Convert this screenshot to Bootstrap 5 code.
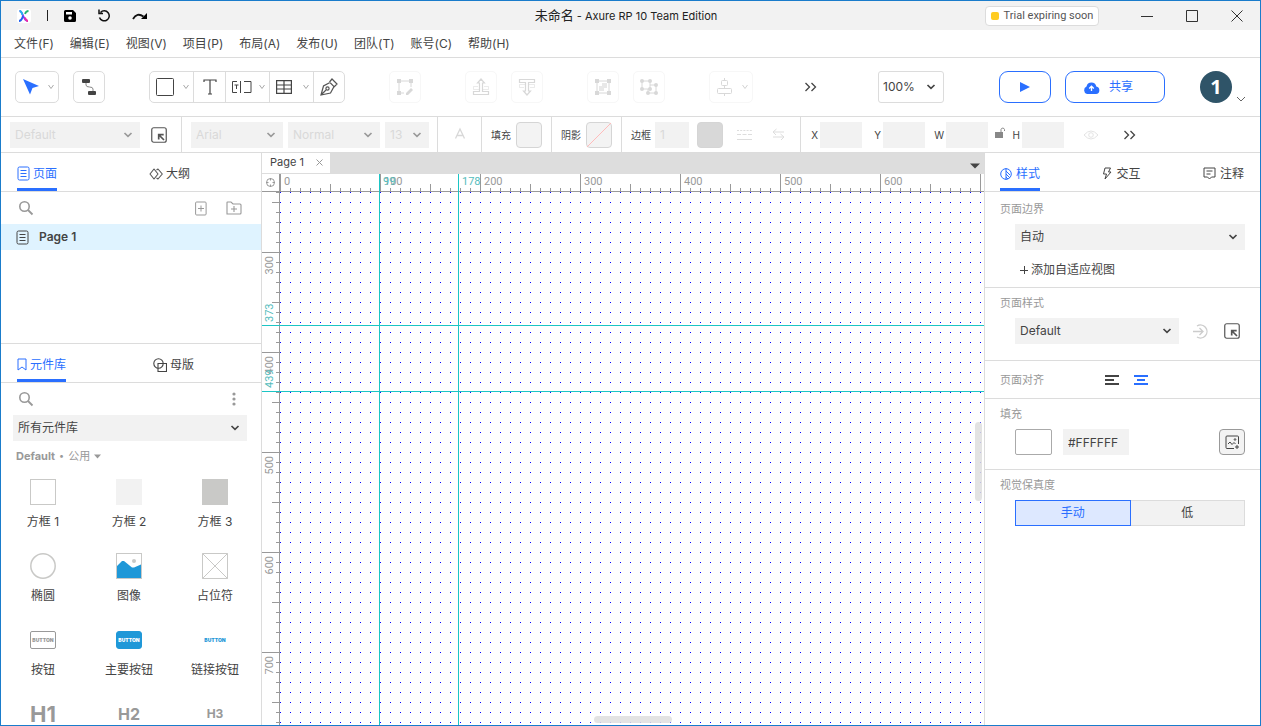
<!DOCTYPE html>
<html lang="zh-CN">
<head>
<meta charset="utf-8">
<meta name="viewport" content="width=device-width, initial-scale=1">
<title>未命名 - Axure RP 10 Team Edition</title>
<link rel="stylesheet" href="https://cdn.jsdelivr.net/npm/bootstrap@5.3.0/dist/css/bootstrap.min.css">
<style>
:root{--ln:#dcdcdc;--ink:#444;--mute:#999;--blue:#2a6fff;--field:#f2f2f2}
body{font:12px/16px Inter,"Noto Sans CJK SC",sans-serif;color:var(--ink);background:#fff}
.app{height:100vh;border:1px solid #1a7ccb;overflow:hidden}
.titlebar,.menus,.toolbar,.format{flex:none}
svg{display:block;flex:none}
button{padding:0;border:0;background:none;color:inherit;display:flex;align-items:center;justify-content:center;flex:none}
a{color:inherit;text-decoration:none}
.titlebar{display:grid;grid-template-columns:1fr auto 1fr;height:29px;background:#f2f2f2;padding:0 17px 0 8px;color:#111}
.titlebar .tools{padding-left:8px}
.titlebar .name{font-size:11px;color:#222}
.titlebar .name b{font-weight:400;font-size:13px}
.bartick{width:1px;height:11px;background:#222;margin:0 16px}
.trial{width:114px;height:20px;background:#fff;border:1px solid var(--ln);border-radius:4px;font:11px/16px Roboto,sans-serif;color:#555;margin-right:9px;gap:5px;white-space:nowrap}
.trial i{width:8px;height:8px;border-radius:2px;background:#fc2}
.win{gap:33px;color:#333}
.menus{height:28px;border-bottom:1px solid var(--ln);padding:0 13px;gap:16px}
.toolbar{height:59px;border-bottom:1px solid var(--ln);padding:0 14px}
.tool{width:32px;height:32px;border:1px solid var(--ln);border-radius:5px;background:#fff}
.tool.wide,.shapes .wide{width:44px;justify-content:space-between;padding:0 3px 0 6px}
.faint{border-color:#f7f7f7;color:#d8d8d8}
.shapes{border:1px solid var(--ln);border-radius:5px;height:32px;margin:0 44px}
.shapes button{height:30px;width:32px;border-right:1px solid var(--ln)}
.shapes button:last-child{border:0;width:30px}
.gap-a{margin-left:44px}.gap-b{margin-left:14px}
select{appearance:none;border:0;border-radius:0;height:26px;padding:0 20px 0 5px;color:inherit;flex:none;font-size:12px;opacity:1!important;
background:var(--field) url("data:image/svg+xml,%3Csvg xmlns='http://www.w3.org/2000/svg' width='10' height='6'%3E%3Cpath d='M1.5 1l3.5 3.3L8.5 1' fill='none' stroke='%23444' stroke-width='1.7'/%3E%3C/svg%3E") no-repeat right 7px center}
select:disabled{color:#d9d9d9;background-image:url("data:image/svg+xml,%3Csvg xmlns='http://www.w3.org/2000/svg' width='10' height='6'%3E%3Cpath d='M1.5 1l3.5 3.3L8.5 1' fill='none' stroke='%23999' stroke-width='1.7'/%3E%3C/svg%3E")}
select.zoomer{width:66px;height:32px;border:1px solid var(--ln);border-radius:3px;background-color:#fff;padding-left:4px}
.pill{height:32px;border:1px solid var(--blue);border-radius:9px;color:var(--blue)}
.play{width:52px}.share{width:100px;gap:9px;padding-right:14px}
.avatar{width:32px;height:32px;border-radius:50%;background:#2f5468;color:#fff;font:700 20px/32px "Open Sans",sans-serif}
.format{height:36px;border-bottom:1px solid var(--ln);font-size:10px}
.format>div{height:35px;flex:none;padding-left:9px;border-right:1px solid var(--ln)}
.format>div:last-child{border:0}
.format input{border:0;background:var(--field);height:26px;width:42px;padding:0 5px;color:#d9d9d9;font-size:12px;border-radius:0}
.dim{width:21px;padding-right:2px;text-align:right}
.dim.first{width:10px}.dim.last{width:17px}
.w-sel{width:130px}.w-font{width:92px}.w-size{width:44px}
.swl{gap:5px}
.sw{width:26px;height:26px;border:1px solid #d5d5d5;border-radius:4px;background:#f3f3f3}
.left{width:261px;border-right:1px solid var(--ln)}
.right{width:276px;border-left:1px solid var(--ln)}
.left,.right{flex:none}
.pages{height:190px}
.tabs{height:39px;border-bottom:1px solid var(--ln)}
.tabs button{height:38px;gap:4px;padding-top:6px;border-bottom:3px solid transparent}
.left .tabs button{gap:3px}
.tabs .on{color:var(--blue);border-color:var(--blue)}
.seek{height:32px;padding:0 19px 0 17px;color:var(--mute)}
.pagerow{height:26px;background:#dff3ff;padding-left:15px;gap:10px;font-weight:600}
.lib{border-top:1px solid var(--ln)}
.lib select{margin:0 14px 0 12px}
.group{height:30px;padding-left:15px;color:var(--mute);font-size:11px}
.group span:nth-child(2){font-size:9px}
.widgets{display:grid;grid-template-columns:repeat(3,86px);grid-auto-rows:74px;padding-top:8px;margin-left:-1px;text-align:center}
.widgets .pic{height:26px;display:flex;align-items:center;justify-content:center;color:#999;font-weight:700}
.widgets div>span{display:block;margin-top:9px;white-space:nowrap}
.box{width:26px;height:26px;border:1px solid #c9c9c7}
.wbtn{width:26px;height:18px;border:1px solid #999;border-radius:2px;font-size:5px;line-height:16px}
.wbtn.p{background:#1f98d8;border-color:#1f98d8;color:#fff;border-radius:3px}
.wbtn.l{border-color:transparent;color:#1f98d8}
.docbar{height:21px;background:#ddd}
.doc{height:20px;width:68px;background:#fff;font-size:11px;padding:0 7px 2px 8px}
.stage text{font:11px Roboto,sans-serif;fill:#999}
.stage .g{fill:#55bcbc}
.bar{position:absolute;background:rgba(222,222,222,.85);border-radius:4px}
.vbar{width:7px;height:79px;right:2px;top:45%}
.hbar{height:7px;width:78px;left:46%;bottom:2px}
.sec{padding:0 15px;border-bottom:1px solid var(--ln)}
.sec:last-child{border:0}
.cap{font-size:11px;color:var(--mute);line-height:18px}
.ctl{margin-left:15px}
.under{margin-top:6px}
.hex{border:0;background:var(--field);width:66px;height:26px;padding:0 5px;margin-left:11px;color:inherit}
.seg label{width:116px;height:26px;line-height:24px;text-align:center;border:1px solid var(--ln);background:var(--field)}
.seg label+input+label{margin-left:-1px}
.seg input:checked+label{background:#dde8ff;border-color:var(--blue);color:var(--blue);position:relative}
</style>
</head>
<body>
<svg width="0" height="0" class="position-absolute">
<defs>
<symbol id="chev" viewBox="0 0 8 6"><path d="M1.500 1l2.500 3.500L6.500 1" stroke="#aaa" fill="none"/></symbol>
<symbol id="more" viewBox="0 0 12 10"><path d="M1 1l4 4-4 4M7 1l4 4-4 4" stroke-width="1.3"/></symbol>
<symbol id="page" viewBox="0 0 13 15"><rect x="1" y="1" width="11" height="13" rx="1.5"/><path d="M3.5 4.500h6M3.500 7.500h6M3.500 10.500h6"/></symbol>
<symbol id="seek" viewBox="0 0 16 16"><circle cx="6.5" cy="6.5" r="4.7" stroke-width="1.6"/><path d="M10 10l4.5 4.5" stroke-width="1.8"/></symbol>
<symbol id="manage" viewBox="0 0 16 16"><rect x=".75" y=".75" width="14.5" height="14.5" rx="2" stroke-width="1.2"/><path d="M7.700 12.500V7.700h5M8 8l5 5" stroke-width="1.7"/></symbol>
</defs>
</svg>
<div class="app d-flex flex-column">
<header class="titlebar align-items-center">
<div class="tools d-flex align-items-center">
<svg width="14" height="14"><rect width="14" height="14" rx="3" fill="#fff"/><g fill="none" stroke-width="1.8"><path d="M2.500 2c4 0 3 10 8.500 10" stroke="#8a3cf0"/><path d="M2 12c3 0 3-3 4-5" stroke="#2461ef"/><path d="M8 5q1-3 3.500-3" stroke="#22b573"/><path d="M8 8.500q1 3.500 3 3.500" stroke="#ef2ca5"/><path d="M2.500 2q2 0 3 4" stroke="#20b9ee"/></g></svg>
<span class="bartick"></span>
<button aria-label="保存"><svg width="12" height="12"><path d="M1.500 0H9l3 3v7.500a1.500 1.500 0 0 1-1.500 1.500h-9A1.500 1.500 0 0 1 0 10.500v-9A1.500 1.500 0 0 1 1.500 0z"/><path d="M2 2h6v2.500H2z" fill="#fff"/><circle cx="6" cy="8" r="1.800" fill="#fff"/></svg></button>
<button aria-label="撤销" style="margin:0 22px"><svg width="12" height="13" fill="none" stroke="#111" stroke-width="1.500"><path d="M2.500 3.500A5 5 0 1 1 1.500 8.500M1 .5V4.500h4"/></svg></button>
<button aria-label="重做"><svg width="16" height="10"><path d="M1 8q4-7 10.500-2.500" fill="none" stroke="#111" stroke-width="1.800"/><path d="M15 2v6H9z"/></svg></button>
</div>
<div class="name text-nowrap"><b>未命名</b> - Axure RP 10 Team Edition</div>
<div class="win d-flex align-items-center justify-content-end">
<button class="trial"><i></i>Trial expiring soon</button>
<button aria-label="最小化"><svg width="12" height="12" stroke="#333"><path d="M0 6.500h12"/></svg></button>
<button aria-label="最大化"><svg width="12" height="12" fill="none" stroke="#333"><path d="M.5.5h11v11H.5z"/></svg></button>
<button aria-label="关闭"><svg width="12" height="12" stroke="#333"><path d="M.5.5l11 11M11.500.5l-11 11"/></svg></button>
</div>
</header>
<nav class="menus d-flex align-items-center">
<a href="#">文件(F)</a><a href="#">编辑(E)</a><a href="#">视图(V)</a><a href="#">项目(P)</a><a href="#">布局(A)</a><a href="#">发布(U)</a><a href="#">团队(T)</a><a href="#">账号(C)</a><a href="#">帮助(H)</a>
</nav>
<div class="toolbar d-flex align-items-center">
<button class="tool wide" aria-label="选择"><svg width="18" height="18"><path d="M1 1l16 7-6.500 2L8 16.500z" fill="#2a6fff"/></svg><svg width="8" height="6"><use href="#chev"/></svg></button>
<button class="tool gap-b" aria-label="连接"><svg width="16" height="18"><rect x="1" y="1" width="8" height="4" rx="1" fill="#444"/><rect x="7" y="13" width="8" height="4" rx="1" fill="#444"/><path d="M5 5v2q0 2 3.500 2t3.500 2v2" fill="none" stroke="#888"/></svg></button>
<div class="shapes d-flex">
<button class="wide" aria-label="矩形"><svg width="18" height="18" fill="none" stroke="#444"><rect x=".5" y=".5" width="17" height="17" rx="1"/></svg><svg width="8" height="6"><use href="#chev"/></svg></button>
<button aria-label="文本"><svg width="14" height="16" fill="none" stroke="#444" stroke-width="1.200"><path d="M1 3V1h12v2M7 1v14M5 15h4"/></svg></button>
<button class="wide" aria-label="表单"><svg width="20" height="12" fill="none" stroke="#444"><path d="M5 .5H.5v11H5M2.500 4h4M4.500 4v4M8.500 0v12M12 .5h7v11h-7"/></svg><svg width="8" height="6"><use href="#chev"/></svg></button>
<button class="wide" aria-label="表格"><svg width="16" height="14" fill="none" stroke="#444" stroke-width="1.200"><path d="M.6.6h14.800v12.800H.6zM.6 5h14.800M.6 9h14.800M8 .6v12.800"/></svg><svg width="8" height="6"><use href="#chev"/></svg></button>
<button aria-label="钢笔"><svg width="18" height="18" fill="none" stroke="#555" stroke-width="1.200"><path d="M1 17L3.500 8 10 4.500l4 4L10.500 15zM1 17l5-5M9.500 4L12 1l5 5-3 3"/><circle cx="7.500" cy="10.500" r="1.600"/></svg></button>
</div>
<button class="tool faint" aria-label="编辑点" disabled><svg width="18" height="18" fill="currentColor"><path d="M1 1h4v4H1zM13 1h4v4h-4zM1 13h4v4H1zM10 15l5-5 2 2-5 5h-2z"/><path d="M3 3h12v6M3 3v12h5" fill="none" stroke="currentColor"/></svg></button>
<button class="tool faint gap-a" aria-label="置于顶层" disabled><svg width="18" height="18" fill="none" stroke="currentColor"><path d="M6 8.500H1.500v3H7M12 8.500h4.500v3H11" opacity=".5"/><path d="M1.500 13.500h6V5H5.500L9 1l3.500 4H10.500v8.500h6v3h-15z" stroke-width="1.200"/></svg></button>
<button class="tool faint gap-b" aria-label="置于底层" disabled><svg width="18" height="18" fill="none" stroke="currentColor"><path d="M6 9.500H1.500v-3H7M12 9.500h4.500v-3H11" opacity=".5"/><path d="M1.500 4.500h6V13H5.500L9 17l3.500-4H10.500V4.500h6v-3h-15z" stroke-width="1.200"/></svg></button>
<button class="tool faint gap-a" aria-label="组合" disabled><svg width="18" height="18" fill="currentColor"><path d="M1 1h4v4H1zM13 1h4v4h-4zM1 13h4v4H1zM13 13h4v4h-4z"/><path d="M3 3h12v12H3z" fill="none" stroke="currentColor"/><path d="M8 5h5v5h-3v3H5V8h3z" opacity=".6"/></svg></button>
<button class="tool faint gap-b" aria-label="取消组合" disabled><svg width="20" height="18" fill="currentColor"><path d="M3 3h8v8H3zM11 7h6v8H9v-4" fill="none" stroke="currentColor"/><circle cx="3" cy="3" r="2"/><circle cx="11" cy="3" r="2"/><circle cx="3" cy="11" r="2"/><circle cx="11" cy="11" r="2"/><circle cx="17" cy="7" r="2"/><circle cx="17" cy="15" r="2"/><circle cx="9" cy="15" r="2"/></svg></button>
<button class="tool wide faint gap-a" aria-label="对齐" disabled><svg width="18" height="18" fill="none" stroke="currentColor"><rect x="5.500" y="2.500" width="6" height="5" rx="1"/><rect x="1.500" y="10.500" width="14" height="5" rx="1"/><path d="M8.500 0v2M8.500 8v2M8.500 16v2"/></svg><svg width="8" height="6" opacity=".5"><use href="#chev"/></svg></button>
<button aria-label="更多工具" style="margin-left:51px"><svg width="13" height="10" fill="none" stroke="#444"><use href="#more"/></svg></button>
<div class="d-flex align-items-center ms-auto">
<select class="zoomer" aria-label="缩放"><option>100%</option></select>
<button class="pill play" aria-label="预览" style="margin:0 14px 0 55px"><svg width="10" height="12"><path d="M0 1l10 5-10 5z" fill="#2a6fff"/></svg></button>
<button class="pill share"><svg width="17" height="13"><path d="M4 13a4 4 0 0 1-.5-7.500 5 5 0 0 1 9.800 0A3.800 3.800 0 0 1 13 13z" fill="#2a6fff"/><path d="M8.500 10V5.500M6.200 7.500l2.300-2.300 2.300 2.300" fill="none" stroke="#fff" stroke-width="1.300"/></svg>共享</button>
<button class="avatar" style="margin-left:35px">1</button>
<svg width="10" height="6" class="ms-1 mt-4" fill="none" stroke="#666"><path d="M1 1l4 4 4-4"/></svg>
</div>
</div>
<div class="format d-flex">
<div class="d-flex align-items-center" style="width:181px"><select class="w-sel" disabled aria-label="样式"><option>Default</option></select><button aria-label="管理样式" style="margin-left:11px"><svg width="16" height="16" fill="none" stroke="#555"><use href="#manage"/></svg></button></div>
<div class="d-flex align-items-center" style="width:256px;gap:5px"><select class="w-font" disabled aria-label="字体"><option>Arial</option></select><select class="w-font" disabled aria-label="字重"><option>Normal</option></select><select class="w-size" disabled aria-label="字号"><option>13</option></select></div>
<div class="d-flex align-items-center justify-content-center pe-2" style="width:44px"><svg width="12" height="16" fill="none" stroke="#d8d8d8" stroke-width="1.300"><path d="M1.500 11.500L6 2l4.500 9.500M3 8.500h6"/></svg></div>
<div class="d-flex align-items-center swl" style="width:70px"><span>填充</span><button class="sw" aria-label="填充"></button></div>
<div class="d-flex align-items-center swl" style="width:70px"><span>阴影</span><button class="sw" aria-label="阴影"><svg width="24" height="24" stroke="#fbb"><path d="M0 24L24 0"/></svg></button></div>
<div class="d-flex align-items-center" style="width:179px"><label for="bw">边框</label><input id="bw" class="ms-1" style="width:34px" value="1" disabled><button class="sw ms-2" style="background:#d8d8d8" aria-label="边框颜色"></button><svg width="16" height="14" style="margin:0 19px 0 14px" fill="none" stroke="#ddd"><path d="M0 2.500h15" stroke-dasharray="2 1.200"/><path d="M0 6.500h15" stroke-dasharray="4 1.500"/><path d="M0 11.500h15"/></svg><svg width="13" height="13" fill="none" stroke="#ddd"><path d="M12 4H1l3.500-3M1 4l3 3M1 9h11L8.500 6M12 9l-3 3"/></svg></div>
<div class="d-flex align-items-center"><label for="x" class="dim first">X</label><input id="x" disabled><label for="y" class="dim">Y</label><input id="y" disabled><label for="w" class="dim">W</label><input id="w" disabled><svg width="10" height="15" style="margin-left:7px"><path d="M0 5h8v6H0z" fill="#888"/><path d="M6 5V2.500a1.800 1.800 0 0 1 3.500 0V4" fill="none" stroke="#888"/></svg><label for="h" class="dim last">H</label><input id="h" disabled><svg width="16" height="10" style="margin:0 24px 0 19px" fill="none" stroke="#e4e4e4"><path d="M1 5q7-8 14 0-7 8-14 0z"/><circle cx="8" cy="5" r="2.300"/></svg><button aria-label="更多属性"><svg width="13" height="10" fill="none" stroke="#444"><use href="#more"/></svg></button></div>
</div>
<main class="d-flex flex-fill" style="min-height:0">
<aside class="left d-flex flex-column">
<section class="pages flex-shrink-0">
<div class="tabs d-flex ps-3"><button class="on"><svg width="13" height="15" fill="none" stroke="currentColor"><use href="#page"/></svg>页面</button><button style="margin-left:92px"><svg width="14" height="12" fill="none" stroke="#555" stroke-width="1.100"><path d="M5 1l4 5-4 5-4-5zM7.500 2L9 1l4.300 5L9 11l-1.500-1" stroke-linejoin="round"/></svg>大纲</button></div>
<div class="seek d-flex align-items-center"><svg width="16" height="16" fill="none" stroke="currentColor"><use href="#seek"/></svg><button class="ms-auto" aria-label="添加页面"><svg width="12" height="15" fill="none" stroke="currentColor"><rect x=".6" y="1" width="10.500" height="13" rx="1"/><path d="M3 7.500h6M6 4.500v6"/></svg></button><button style="margin-left:19px" aria-label="添加文件夹"><svg width="16" height="14" fill="none" stroke="currentColor"><path d="M1 13V1.500Q1 1 1.500 1H5l2 2h7q1 0 1 1v8q0 1-1 1zM5 8h6M8 5v6" stroke-width="1.100"/></svg></button></div>
<div class="pagerow d-flex align-items-center"><svg width="13" height="15" fill="none" stroke="#444"><use href="#page"/></svg>Page 1</div>
</section>
<section class="lib d-flex flex-column flex-fill overflow-hidden">
<div class="tabs d-flex ps-3 flex-shrink-0"><button class="on"><svg width="10" height="13" fill="none" stroke="currentColor"><path d="M1 1h8v11L5 9l-4 3z"/></svg>元件库</button><button style="margin-left:87px"><svg width="14" height="14" fill="none" stroke="#444" stroke-width="1.100"><circle cx="5.500" cy="5.500" r="4.700"/><path d="M5 5.500h8.500v8H5z"/></svg>母版</button></div>
<div class="seek d-flex align-items-center flex-shrink-0"><svg width="16" height="16" fill="none" stroke="currentColor"><use href="#seek"/></svg><button class="ms-auto pe-1" aria-label="选项"><svg width="8" height="14" fill="currentColor"><circle cx="4" cy="2" r="1.600"/><circle cx="4" cy="7" r="1.600"/><circle cx="4" cy="12" r="1.600"/></svg></button></div>
<select aria-label="元件库"><option>所有元件库</option></select>
<div class="group d-flex align-items-center gap-1 flex-shrink-0"><b>Default</b><span>•</span><span>公用</span><svg width="7" height="5" fill="#999"><path d="M0 .5h7L3.500 4.500z"/></svg></div>
<div class="widgets">
<div><div class="pic"><i class="box"></i></div><span>方框 1</span></div>
<div><div class="pic"><i class="box border-0" style="background:#f2f2f2"></i></div><span>方框 2</span></div>
<div><div class="pic"><i class="box" style="background:#c9c9c7"></i></div><span>方框 3</span></div>
<div><div class="pic"><svg width="26" height="26" fill="none" stroke="#c9c9c7" stroke-width="1.500"><circle cx="13" cy="13" r="12.200"/></svg></div><span>椭圆</span></div>
<div><div class="pic"><svg width="26" height="26"><rect x=".5" y=".5" width="25" height="25" fill="#fff" stroke="#c9c9c7"/><path d="M1 13l5-5h2l8 6.500h2l7-3V25H1z" fill="#1f98d8"/><circle cx="18" cy="8" r="2" fill="#c9c9c7"/></svg></div><span>图像</span></div>
<div><div class="pic"><svg width="26" height="26" fill="none" stroke="#c9c9c7"><path d="M.5.5h25v25H.5zM.5.5l25 25M25.500.5l-25 25"/></svg></div><span>占位符</span></div>
<div><div class="pic"><b class="wbtn">BUTTON</b></div><span>按钮</span></div>
<div><div class="pic"><b class="wbtn p">BUTTON</b></div><span>主要按钮</span></div>
<div><div class="pic"><b class="wbtn l">BUTTON</b></div><span>链接按钮</span></div>
<div><div class="pic" style="font-size:22px">H1</div></div>
<div><div class="pic" style="font-size:16px">H2</div></div>
<div><div class="pic" style="font-size:12px">H3</div></div>
</div>
</section>
</aside>
<section class="d-flex flex-column flex-fill" style="min-width:0">
<div class="docbar d-flex justify-content-between"><div class="doc d-flex align-items-center justify-content-between">Page 1<button aria-label="关闭页面"><svg width="7" height="7" stroke="#999"><path d="M.5.5l6 6M6.500.5l-6 6"/></svg></button></div><button class="me-1" aria-label="页面列表"><svg width="10" height="6" class="mt-1"><path d="M0 .5h10L5 5.500z" fill="#444"/></svg></button></div>
<div class="stage position-relative flex-fill overflow-hidden">
<svg width="100%" height="100%" class="position-absolute" shape-rendering="crispEdges">
<defs>
<pattern id="dots" x="18" y="18" width="10" height="10" patternUnits="userSpaceOnUse"><rect width="1" height="1" fill="#00f"/></pattern>
<pattern id="ht" x="18" width="100" height="17" patternUnits="userSpaceOnUse"><path d="M.5 0v17M50.500 10v7M10.500 14v3M20.500 14v3M30.500 14v3M40.500 14v3M60.500 14v3M70.500 14v3M80.500 14v3M90.500 14v3" stroke="#999"/></pattern>
<pattern id="vt" y="78" width="17" height="100" patternUnits="userSpaceOnUse"><path d="M0 .5h17M10 50.500h7M14 10.500h3M14 20.500h3M14 30.500h3M14 40.500h3M14 60.500h3M14 70.500h3M14 80.500h3M14 90.500h3" stroke="#999"/></pattern>
</defs>
<rect x="18" y="18" width="100%" height="100%" fill="url(#dots)"/>
<rect x="18" width="100%" height="17" fill="url(#ht)"/>
<rect y="18" width="17" height="100%" fill="url(#vt)"/>
<path d="M0 17.500h4000M17.500 0v4000" stroke="#999"/>
<g fill="none" stroke="#999" shape-rendering="auto"><circle cx="8.500" cy="8.500" r="4"/><path d="M8.500 4v2.500M8.500 10.500v2.500M4 8.500h2.500M10.500 8.500h2.500"/></g>
<text x="22" y="11">0</text><text x="122" y="11">100</text><text x="222" y="11">200</text><text x="322" y="11">300</text><text x="422" y="11">400</text><text x="522" y="11">500</text><text x="622" y="11">600</text>
<text class="g" x="121" y="11">99</text><text class="g" x="200" y="11">178</text>
<g text-anchor="end"><text transform="translate(11 82) rotate(-90)">300</text><text transform="translate(11 182) rotate(-90)">400</text><text transform="translate(11 282) rotate(-90)">500</text><text transform="translate(11 382) rotate(-90)">600</text><text transform="translate(11 482) rotate(-90)">700</text></g>
<text class="g" transform="translate(11 148) rotate(-90)">373</text><text class="g" transform="translate(11 214) rotate(-90)">439</text>
<path d="M117.500 0v4000M196.500 0v4000M0 151.500h4000M0 217.500h4000" stroke="#1cc5c5"/>
</svg>
<div class="bar vbar"></div><div class="bar hbar"></div>
</div>
</section>
<aside class="right">
<div class="tabs d-flex justify-content-between" style="padding:0 16px 0 15px"><button class="on"><svg width="12" height="12" fill="none" stroke="currentColor"><circle cx="6" cy="6" r="5.300"/><path d="M6 0v12M6 3l4 4M6 6l4 4M6 9l2 2"/></svg>样式</button><button><svg width="10" height="13" fill="none" stroke="#444"><path d="M3 1h5.500L6.500 5H9L3 12l1.500-5H1.500z" stroke-linejoin="round"/></svg>交互</button><button><svg width="13" height="13" fill="none" stroke="#444"><path d="M1 1h11v9H8.500L6.500 12l-2-2H1zM3.500 4h6M3.500 7h4" stroke-linejoin="round"/></svg>注释</button></div>
<div class="sec pt-2" style="height:96px"><div class="cap">页面边界</div><select class="ctl under" style="width:230px" aria-label="页面边界"><option>自动</option></select><a href="#" class="d-flex align-items-center" style="margin:12px 0 0 20px;gap:3px"><svg width="8" height="8" stroke="#444"><path d="M0 4.500h8M4.500 0v8"/></svg>添加自适应视图</a></div>
<div class="sec" style="height:73px;padding-top:6px"><div class="cap">页面样式</div><div class="d-flex align-items-center under"><select class="ctl" style="width:164px" aria-label="页面样式"><option>Default</option></select><button style="margin:0 16px 0 14px" aria-label="应用"><svg width="15" height="15" fill="none" stroke="#ccc" stroke-width="1.300"><path d="M4 2a6.500 6.500 0 1 1 0 11M0 7.500h10M6.500 4L10 7.500 6.500 11"/></svg></button><button aria-label="管理页面样式"><svg width="16" height="16" fill="none" stroke="#555"><use href="#manage"/></svg></button></div></div>
<div class="sec d-flex align-items-center" style="height:38px"><div class="cap">页面对齐</div><button style="margin:0 15px 0 61px" aria-label="左对齐"><svg width="14" height="10" stroke="#444" stroke-width="2"><path d="M0 1h14M0 5h9M0 9h14"/></svg></button><button aria-label="居中对齐"><svg width="14" height="10" stroke="#2a6fff" stroke-width="2"><path d="M0 1h14M3 5h8M0 9h14"/></svg></button></div>
<div class="sec" style="height:71px;padding-top:6px"><label class="cap d-block" for="hex">填充</label><div class="d-flex under"><button class="ctl" aria-label="填充颜色" style="width:37px;height:26px;border:1px solid #aaa;border-radius:2px"></button><input class="hex" id="hex" value="#FFFFFF"><button class="sw ms-auto" style="border-color:#999" aria-label="填充图片"><svg width="15" height="15" fill="none" stroke="#444"><path d="M9 13.500H2Q1 13.500 1 12.500V2Q1 1 2 1h10.500q1 0 1 1v7M3 9l2-2 2 2.500 2-2 1.500 1.500M12 10v4M10 12h4"/><circle cx="10" cy="4.500" r=".8"/></svg></button></div></div>
<div class="sec" style="padding-top:6px"><div class="cap">视觉保真度</div><div class="seg d-flex ctl under"><input class="btn-check" type="radio" name="fid" id="f1" checked><label for="f1">手动</label><input class="btn-check" type="radio" name="fid" id="f2"><label for="f2">低</label></div></div>
</aside>
</main>
</div>
<script src="https://cdn.jsdelivr.net/npm/bootstrap@5.3.0/dist/js/bootstrap.bundle.min.js"></script>
</body>
</html>
